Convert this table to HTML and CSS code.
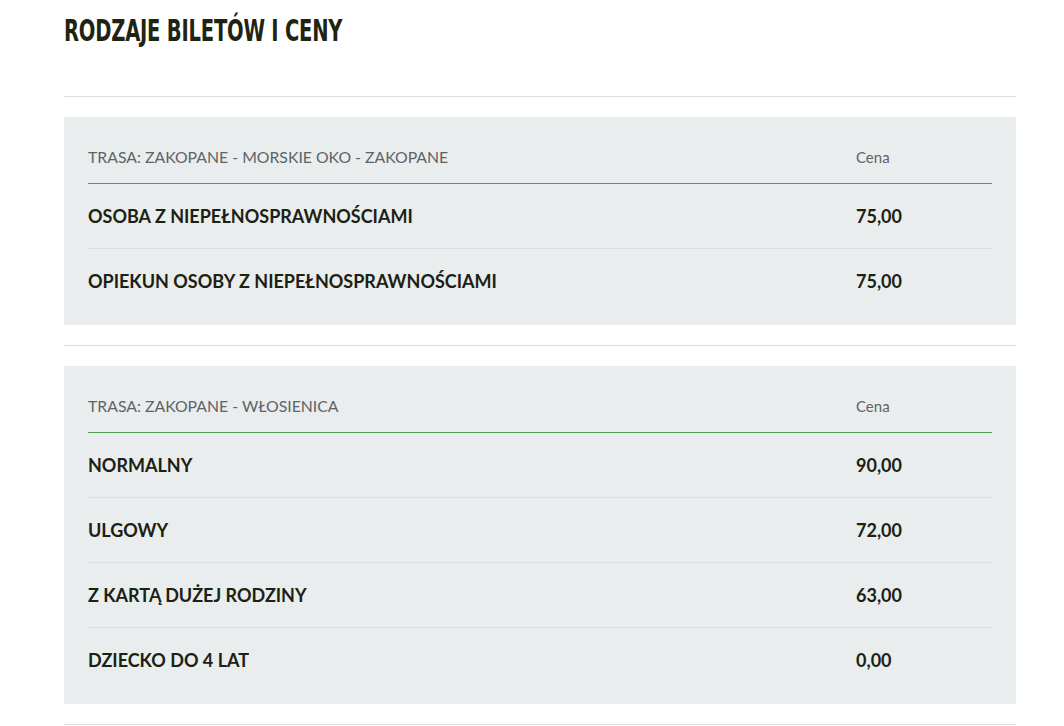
FILE: index.html
```html
<!DOCTYPE html>
<html lang="pl">
<head>
    <meta charset="UTF-8">
    <meta name="viewport" content="width=device-width, initial-scale=1.0">
    <title>Rodzaje biletów i ceny</title>
    <link rel="stylesheet" href="styles.css">
</head>
<body>
    <div class="container">
        <h1 class="title">Rodzaje biletów i ceny</h1>

        <hr class="divider">

        <div class="price-box">
            <div class="price-head">
                <div>Trasa: Zakopane - Morskie Oko - Zakopane</div>
                <div class="price-col">Cena</div>
            </div>
            <div class="price-row">
                <div>Osoba z niepełnosprawnościami</div>
                <div class="price-col">75,00</div>
            </div>
            <div class="price-row">
                <div>Opiekun osoby z niepełnosprawnościami</div>
                <div class="price-col">75,00</div>
            </div>
        </div>

        <hr class="divider">

        <div class="price-box">
            <div class="price-head">
                <div>Trasa: Zakopane - Włosienica</div>
                <div class="price-col">Cena</div>
            </div>
            <div class="price-row">
                <div>Normalny</div>
                <div class="price-col">90,00</div>
            </div>
            <div class="price-row">
                <div>Ulgowy</div>
                <div class="price-col">72,00</div>
            </div>
            <div class="price-row">
                <div>Z kartą dużej rodziny</div>
                <div class="price-col">63,00</div>
            </div>
            <div class="price-row">
                <div>Dziecko do 4 lat</div>
                <div class="price-col">0,00</div>
            </div>
        </div>

        <hr class="divider">
    </div>
</body>
</html>
```

FILE: styles.css
```css
body {
    margin: 0;
    background: #fff;
    font-family: Lato, "Open Sans", sans-serif;
    color: #1c2112;
}

.container {
    width: 952px;
    margin: 0 0 0 64px;
    padding-top: 13px;
}

.title {
    margin: 0;
    font-family: "Liberation Sans Narrow", "DejaVu Sans Condensed", sans-serif;
    font-weight: 700;
    font-size: 31px;
    line-height: 34px;
    letter-spacing: -0.3px;
    text-transform: uppercase;
    color: #1f2412;
    transform: scaleX(0.7);
    transform-origin: left center;
}

.divider {
    border: 0;
    border-top: 1px solid #dcdcdc;
    margin: 49px 0 20px;
}

.price-box + .divider {
    margin: 20px 0;
}

.price-box {
    background: #e9edee;
    padding: 24px 24px 12px;
}

.price-head,
.price-row {
    display: grid;
    grid-template-columns: 1fr 136px;
    align-items: center;
}

.price-head {
    line-height: 32px;
    padding-bottom: 10px;
    border-bottom: 1px solid #4b9a4e;
    font-size: 15.8px;
    color: #5e6466;
    text-transform: uppercase;
}

.price-head .price-col {
    text-transform: none;
    font-size: 15px;
}

.price-row {
    height: 64px;
    border-bottom: 1px solid #dadfe1;
    font-size: 18px;
    font-weight: 700;
    text-transform: uppercase;
}

.price-row:last-child {
    border-bottom: 0;
}
```
